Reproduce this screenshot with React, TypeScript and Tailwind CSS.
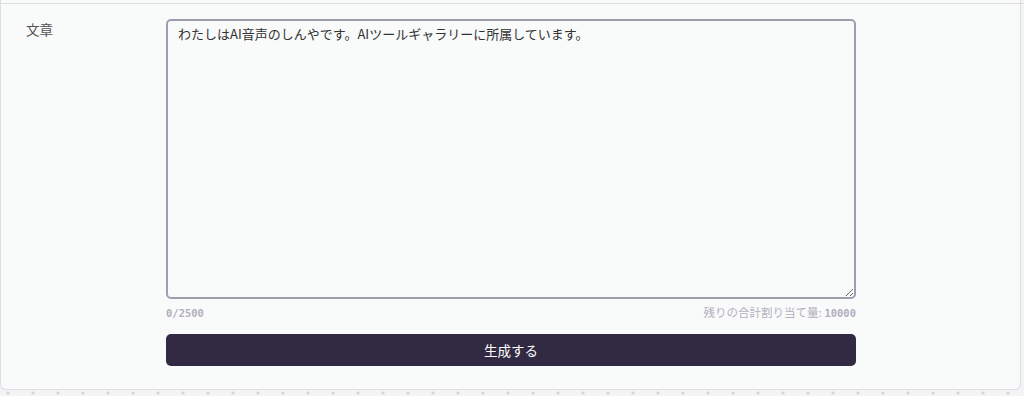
import { useState } from 'react';

const jp = "font-['Noto_Sans_CJK_JP','Noto_Sans',sans-serif]";

export default function App() {
  const [text, setText] = useState('わたしはAI音声のしんやです。AIツールギャラリーに所属しています。');

  return (
    <div className={`min-h-[396px] w-[1024px] overflow-hidden bg-[#f4f4f7] bg-[radial-gradient(circle,#cfcfd8_1.2px,transparent_1.6px)] bg-[size:25px_25px] bg-[position:-4.5px_5.5px] ${jp}`}>
      <div className="h-[390px] w-[1021px] rounded-b-md border-x border-b border-[#dedde4] bg-[#f9fafa]">
        <div className="h-[3px]" />
        <div className="-mr-[4px] border-t border-[#dedde4]">
          <div className="flex pt-[15px] pl-[25px]">
            <div className="w-[140px] pt-[1px] text-[13.5px] leading-[18px] text-[#555]">文章</div>
            <div className="flex w-[690px] flex-col">
              <textarea
                value={text}
                onChange={(e) => setText(e.target.value)}
                className="h-[280px] w-full resize-y rounded-[5px] border-2 border-[#a09eae] bg-[#f9fafa] px-[10px] py-[3px] text-[13px] leading-5 text-[#333] outline-none"
              />
              <div className="mt-[5px] flex items-center justify-between text-[11.5px] leading-4 text-[#b2b0bd]">
                <span className="font-['DejaVu_Sans_Mono',monospace] text-[10.5px] font-bold">0/2500</span>
                <span>
                  残りの合計割り当て量: <span className="font-['DejaVu_Sans_Mono',monospace] text-[10.5px] font-bold">10000</span>
                </span>
              </div>
              <button
                type="button"
                className="mt-[13px] h-[32px] w-full rounded-[5px] bg-[#312a42] text-[13.5px] text-white"
              >
                生成する
              </button>
            </div>
          </div>
        </div>
      </div>
    </div>
  );
}
